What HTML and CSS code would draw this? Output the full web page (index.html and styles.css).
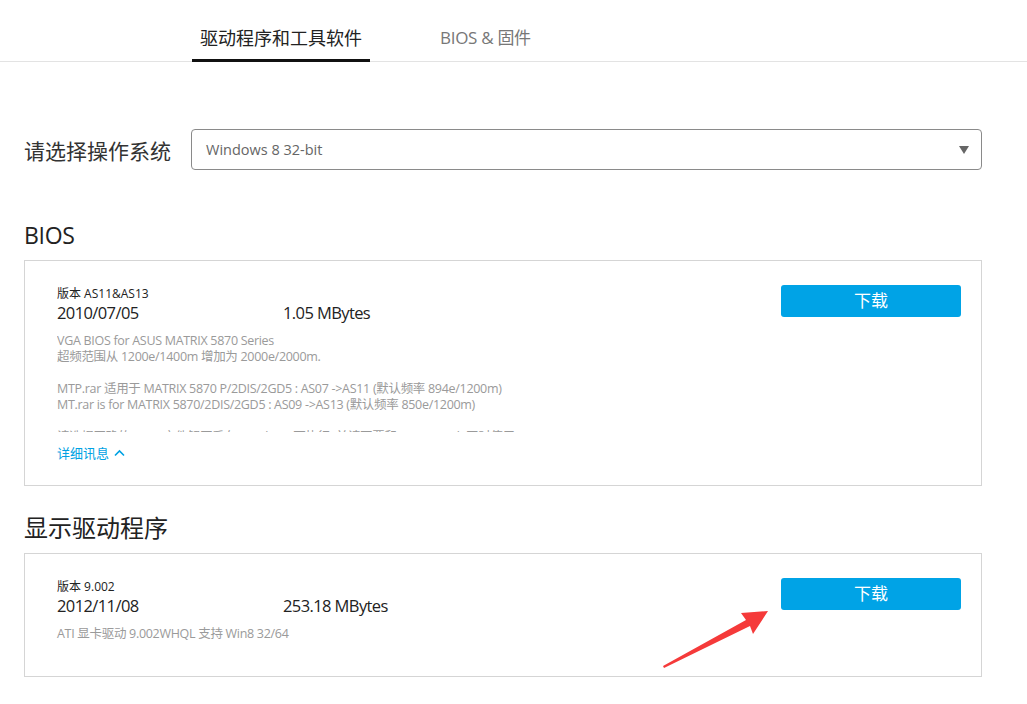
FILE: index.html
```html
<!DOCTYPE html>
<html lang="zh-CN">
<head>
<meta charset="utf-8">
<title>驱动程序和工具软件</title>
<link rel="stylesheet" href="styles.css">
</head>
<body>
<div class="tabs">
  <div class="tab active">驱动程序和工具软件</div>
  <div class="tab">BIOS &amp; 固件</div>
</div>

<div class="page">
  <div class="os-row">
    <div class="os-label">请选择操作系统</div>
    <div class="select">
      <span class="select-text">Windows 8 32-bit</span>
      <span class="caret"></span>
    </div>
  </div>

  <h2 class="section-title">BIOS</h2>
  <div class="card">
    <div class="info">
      <div class="version">版本 AS11&amp;AS13</div>
      <div class="meta"><span class="date">2010/07/05</span><span class="size">1.05 MBytes</span></div>
      <div class="desc clipped">
        <p>VGA BIOS for ASUS MATRIX 5870 Series<br>超频范围从 1200e/1400m 增加为 2000e/2000m.</p>
        <p>MTP.rar 适用于 MATRIX 5870 P/2DIS/2GD5 : AS07 -&gt;AS11 (默认频率 894e/1200m)<br>MT.rar is for MATRIX 5870/2DIS/2GD5 : AS09 -&gt;AS13 (默认频率 850e/1200m)</p>
        <p>请选择正确的 BIOS 文件解压后在 Windows 下执行 ,并请不要和 GPU Tweak 同时使用</p>
      </div>
      <div class="more">详细讯息 <svg class="chev" width="11" height="8" viewBox="0 0 11 8"><path d="M1 6.5 L5.5 2 L10 6.5" fill="none" stroke="#00a2e3" stroke-width="1.6"/></svg></div>
    </div>
    <div class="btn">下载</div>
  </div>

  <h2 class="section-title">显示驱动程序</h2>
  <div class="card card-last">
    <div class="info">
      <div class="version">版本 9.002</div>
      <div class="meta"><span class="date">2012/11/08</span><span class="size">253.18 MBytes</span></div>
      <div class="desc"><p>ATI 显卡驱动 9.002WHQL 支持 Win8 32/64</p></div>
    </div>
    <div class="btn">下载</div>
  </div>
</div>

<svg class="arrow" width="1027" height="704" viewBox="0 0 1027 704">
  <polygon points="663,666 746,620 741,613 768,611 753,634 750,626 664,668" fill="#f53a3a"/>
</svg>
</body>
</html>
```

FILE: styles.css
```css
html, body {
  margin: 0;
  padding: 0;
  background: #fff;
}
body {
  font-family: "Open Sans", "Noto Sans CJK SC", sans-serif;
  color: #333;
  position: relative;
  width: 1027px;
  height: 704px;
  overflow: hidden;
}
.tabs {
  display: flex;
  height: 62px;
  border-bottom: 1px solid #e3e3e3;
  padding-left: 192px;
  gap: 62px;
  box-sizing: border-box;
}
.tab {
  font-size: 17px;
  letter-spacing: -0.3px;
  line-height: 24px;
  padding-top: 26px;
  color: #777;
  padding-left: 8px;
  padding-right: 8px;
  box-sizing: border-box;
  height: 62px;
}
.tab.active {
  font-size: 18px;
  letter-spacing: 0;
  color: #222;
  border-bottom: 3px solid #111;
  width: 178px;
  text-align: center;
  padding: 26px 0 0;
}
.page {
  padding: 0 45px 0 24px;
}
.os-row {
  display: flex;
  align-items: center;
  margin-top: 67px;
}
.os-label {
  font-size: 21px;
  color: #333;
  width: 167px;
}
.select {
  flex: 1;
  height: 41px;
  border: 1px solid #8a8a8a;
  border-radius: 4px;
  box-sizing: border-box;
  display: flex;
  align-items: center;
  justify-content: space-between;
  padding: 0 12px 0 14px;
}
.select-text {
  font-size: 14.5px;
  color: #666;
}
.caret {
  width: 0;
  height: 0;
  border-left: 5px solid transparent;
  border-right: 5px solid transparent;
  border-top: 8px solid #666;
}
.section-title {
  font-weight: normal;
  font-size: 23px;
  line-height: 30px;
  margin: 50px 0 10px;
  color: #222;
  letter-spacing: -0.3px;
}
.card {
  border: 1px solid #d5d5d5;
  display: flex;
  justify-content: space-between;
  padding: 24px 20px 24px 32px;
}
.card + .section-title {
  margin-top: 27px;
  font-size: 24px;
  letter-spacing: 0;
}
.card-last {
  padding-bottom: 34px;
}
.info {
  flex: 1;
}
.version {
  font-size: 12px;
  line-height: 16px;
  color: #222;
  padding-top: 1px;
}
.meta {
  display: flex;
  font-size: 16.5px;
  letter-spacing: -0.6px;
  line-height: 22px;
  color: #222;
}
.date {
  width: 226px;
}
.desc {
  margin-top: 9px;
  font-size: 12.5px;
  letter-spacing: -0.3px;
  line-height: 16px;
  color: #9a9a9a;
}
.desc p {
  margin: 0 0 16px;
}
.desc p:last-child {
  margin-bottom: 0;
}
.clipped {
  height: 99px;
  overflow: hidden;
}
.more {
  margin-top: 13px;
  font-size: 13px;
  line-height: 16px;
  color: #00a2e3;
  display: flex;
  align-items: center;
  gap: 5px;
}
.btn {
  width: 180px;
  height: 32px;
  background: #00a3e6;
  border-radius: 3px;
  color: #fff;
  font-size: 17px;
  line-height: 32px;
  text-align: center;
  flex: none;
}
.arrow {
  position: absolute;
  left: 0;
  top: 0;
  pointer-events: none;
}
```
